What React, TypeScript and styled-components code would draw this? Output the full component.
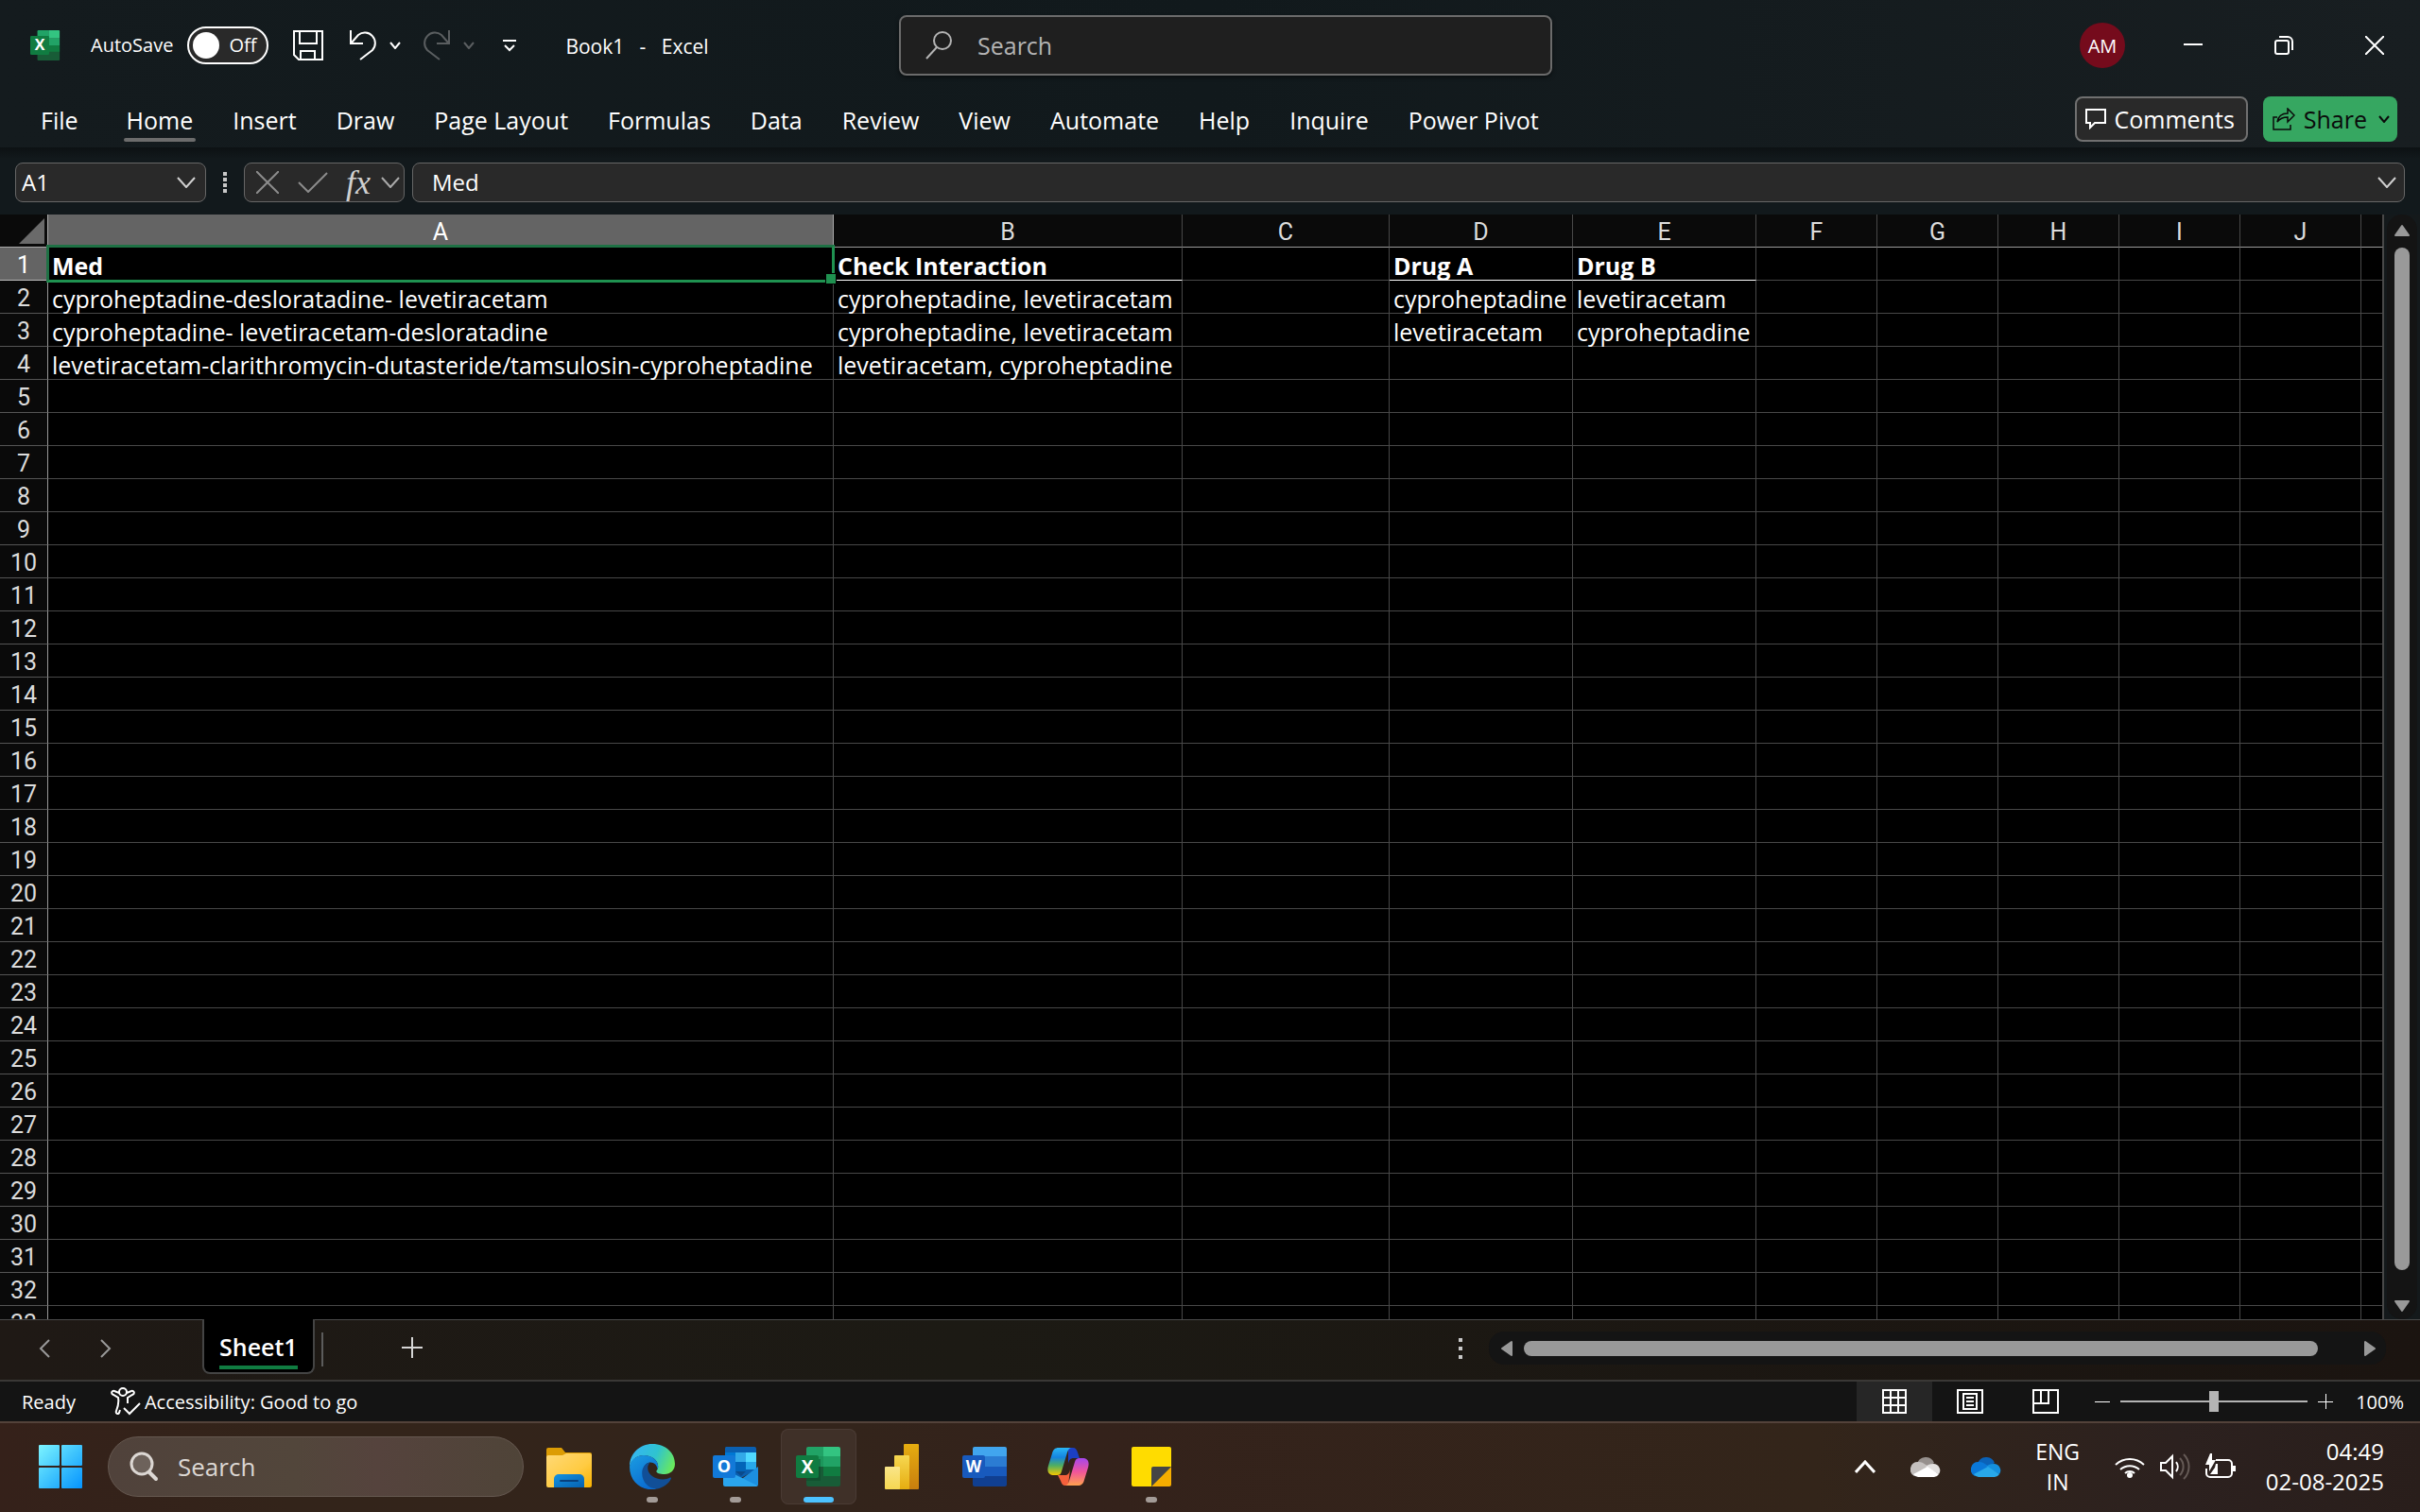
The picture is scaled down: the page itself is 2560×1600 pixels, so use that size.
import React from "react";
import styled, { createGlobalStyle, css } from "styled-components";

const uiFont = '"Open Sans", "Noto Sans", sans-serif';
const headFont = 'Roboto, "Liberation Sans", sans-serif';

const GlobalStyle = createGlobalStyle`
  * { box-sizing: border-box; }
  html, body { margin: 0; height: 100%; overflow: hidden; background: #000; }
  body { font-family: ${uiFont}; color: #fff; }
  button, input { font: inherit; color: inherit; }
  button { background: none; border: 0; padding: 0; margin: 0; cursor: pointer; }
  svg { display: block; flex: none; }
`;

const Desktop = styled.div`
  display: flex;
  flex-direction: column;
  height: 100vh;
  overflow: hidden;
  background: #131a1d;
`;

/* ---------- title bar ---------- */

const TitleBar = styled.header`
  flex: none;
  display: grid;
  grid-template-columns: minmax(0, 951fr) minmax(0, 691fr) minmax(0, 918fr);
  align-items: center;
  height: 96px;
  background: linear-gradient(90deg, #141b1e, #11191c 50%, #181e21);
`;

const QuickAccess = styled.div`
  display: flex;
  align-items: center;
  padding-left: 32px;
  font-size: 20px;
  white-space: nowrap;
`;

const AutoSave = styled.label`
  display: flex;
  align-items: center;
  gap: 15px;
  margin-left: 32px;
  line-height: 40px;
`;

const ToggleTrack = styled.span`
  display: flex;
  align-items: center;
  gap: 10px;
  width: 86px;
  height: 40px;
  padding-left: 4px;
  border: 2px solid #fff;
  border-radius: 20px;
  background: #292929;
`;

const ToggleInput = styled.input`
  appearance: none;
  width: 28px;
  height: 28px;
  margin: 0;
  border-radius: 50%;
  background: #fff;
`;

const ToolButton = styled.button<{ $space: number; $dim?: boolean }>`
  display: flex;
  margin-left: ${(p) => p.$space}px;
  color: ${(p) => (p.$dim ? "#5a5e60" : "#fff")};
`;

const DocTitle = styled.h1`
  margin: 0 0 0 52px;
  font-size: 21px;
  font-weight: 400;
  line-height: 32px;
  padding-top: 2px;
  white-space: pre;
`;

const TopSearch = styled.label`
  display: flex;
  align-items: center;
  gap: 27px;
  height: 64px;
  padding-left: 26px;
  border: 2px solid #6b6b6b;
  border-radius: 8px;
  background: #1f1f1f;
  box-shadow: 0 2px 4px rgba(0, 0, 0, 0.5);
  color: #b4b4b4;
`;

const BareInput = styled.input`
  flex: 1;
  min-width: 0;
  width: 100%;
  padding: 0;
  border: 0;
  outline: 0;
  background: transparent;
  &::placeholder { color: inherit; opacity: 1; }
`;

const SearchInput = styled(BareInput)`
  font-size: 25px;
`;

const WindowControls = styled.div`
  display: flex;
  align-items: center;
  justify-content: flex-end;
`;

const Avatar = styled.button`
  width: 48px;
  height: 48px;
  margin-right: 24px;
  border-radius: 50%;
  background: #750b1c;
  font-size: 20px;
`;

const WindowButton = styled.button`
  display: grid;
  place-items: center;
  width: 96px;
  height: 96px;
`;

/* ---------- ribbon tabs ---------- */

const RibbonRow = styled.div`
  flex: none;
  display: flex;
  align-items: center;
  height: 60px;
  padding: 0 24px 0 22px;
  background: linear-gradient(90deg, #141b1e, #11191c 50%, #181e21);
`;

const TabList = styled.nav`
  display: flex;
  flex: 1;
  & > :first-child { margin-right: 9px; }
`;

const RibbonTab = styled.button<{ $active?: boolean }>`
  position: relative;
  padding: 0 21px;
  height: 48px;
  font-size: 25px;
  line-height: 50px;
  white-space: nowrap;
  ${(p) =>
    p.$active &&
    css`
      &::after {
        content: "";
        position: absolute;
        left: 18px;
        right: 18px;
        bottom: 0;
        height: 4px;
        border-radius: 2px;
        background: #6c6c6c;
      }
    `}
`;

const ActionButton = styled.button<{ $primary?: boolean }>`
  display: flex;
  align-items: center;
  gap: 9px;
  height: 48px;
  margin-left: 16px;
  padding: 0 ${(p) => (p.$primary ? 8 : 12)}px 0 ${(p) => (p.$primary ? 10 : 9)}px;
  border: ${(p) => (p.$primary ? "0" : "2px solid #707070")};
  border-radius: 8px;
  background: ${(p) => (p.$primary ? "#36a761" : "#292929")};
  color: ${(p) => (p.$primary ? "#0a0a0a" : "#fff")};
  font-size: 25px;
`;

const MenuMark = styled.span`
  display: flex;
  padding-left: 3px;
`;

/* ---------- formula bar ---------- */

const FormulaRow = styled.div`
  flex: none;
  display: flex;
  align-items: center;
  height: 71px;
  padding: 2px 16px 0;
  background: linear-gradient(#0c1113, #12191c 12px);
`;

const Field = styled.div<{ $grow?: boolean }>`
  display: flex;
  align-items: center;
  height: 42px;
  border: 1px solid #666;
  border-radius: 8px;
  background: #292929;
  color: #fff;
  font-size: 24px;
  ${(p) => p.$grow && "flex: 1;"}
`;

const NameField = styled(Field)`
  width: 202px;
  padding: 0 10px 0 6px;
`;

const FormulaTools = styled(Field)`
  width: 170px;
  padding: 0 4px 0 12px;
  color: #8c8c8c;
`;

const FormulaField = styled(Field)`
  margin-left: 8px;
  padding: 0 8px 0 20px;
`;

const Grip = styled.div`
  display: flex;
  justify-content: center;
  width: 40px;
  color: #c8c8c8;
`;

const IconButton = styled.button<{ $color?: string; $space?: number }>`
  display: flex;
  margin-left: ${(p) => p.$space ?? 0}px;
  color: ${(p) => p.$color ?? "inherit"};
`;

const FxButton = styled(IconButton)`
  margin: 0 auto 0 19px;
  font-family: "Liberation Serif", serif;
  font-style: italic;
  font-size: 36px;
  line-height: 36px;
`;

/* ---------- sheet ---------- */

const SheetArea = styled.main`
  flex: 1;
  min-height: 0;
  display: flex;
  background: #14191b;
`;

const GridClip = styled.div`
  flex: 1;
  min-width: 0;
  overflow: hidden;
  background: #000;
  border-right: 1px solid #484848;
`;

const Grid = styled.table`
  width: 100%;
  table-layout: fixed;
  border-collapse: separate;
  border-spacing: 0;
  font-size: 25px;
  line-height: 30px;
`;

const Corner = styled.th`
  height: 35px;
  padding: 0 3px 0 20px;
  border-right: 1px solid #aaa;
  border-bottom: 1px solid #aaa;
  background: #0a0a0a;
`;

const ColumnHead = styled.th<{ $active?: boolean }>`
  height: 35px;
  padding: 3px 0 0;
  overflow: hidden;
  border-right: 1px solid ${(p) => (p.$active ? "#aaa" : "#484848")};
  border-bottom: 1px solid #999;
  background: ${(p) => (p.$active ? "#646464" : "#0a0a0a")};
  color: ${(p) => (p.$active ? "#fff" : "#dcdcdc")};
  font-family: ${headFont};
  font-weight: 400;
  line-height: 31px;
`;

const RowHead = styled.th<{ $active?: boolean }>`
  height: 35px;
  padding: 4px 0 0;
  border-right: 1px solid #999;
  border-bottom: 1px solid ${(p) => (p.$active ? "#bbb" : "#555")};
  background: ${(p) => (p.$active ? "#646464" : "#0a0a0a")};
  color: ${(p) => (p.$active ? "#fff" : "#dcdcdc")};
  font-family: ${headFont};
  font-weight: 400;
`;

const Cell = styled.td<{ $head?: boolean; $rule?: boolean }>`
  position: relative;
  height: 35px;
  padding: 3px 0 0 4px;
  border-right: 1px solid #484848;
  border-bottom: 1px solid ${(p) => (p.$rule ? "#fff" : "#484848")};
  font-weight: ${(p) => (p.$head ? 700 : 400)};
  white-space: nowrap;
`;

const Selection = styled.div`
  position: absolute;
  z-index: 1;
  inset: -3px -2px -3px -2px;
  border: 3px solid #1f9150;
  border-top-color: #1f7145;
  border-left-color: #1f7145;
  &::after {
    content: "";
    position: absolute;
    right: -5px;
    bottom: -5px;
    width: 10px;
    height: 10px;
    border: 1px solid #000;
    background: #1f9150;
  }
`;

const VerticalScroll = styled.div`
  flex: none;
  display: flex;
  flex-direction: column;
  align-items: center;
  gap: 11px;
  width: 32px;
  margin: 0 3px;
  padding: 10px 0 7px;
  border-radius: 16px;
  background: #141414;
  color: #999;
`;

const ScrollThumb = styled.div<{ $axis: "x" | "y" }>`
  flex: 1;
  border-radius: 8px;
  background: #999;
  ${(p) => (p.$axis === "x" ? "height: 16px;" : "width: 16px; margin-bottom: 20px;")}
`;

/* ---------- sheet tabs ---------- */

const SheetBar = styled.div`
  flex: none;
  display: flex;
  align-items: flex-start;
  height: 64px;
  border-top: 1px solid #4a4a4a;
  background: linear-gradient(90deg, #1f1915, #1c1a14 40%, #1b1410);
`;

const SheetNav = styled.div`
  display: flex;
  align-items: center;
  gap: 53px;
  width: 214px;
  height: 60px;
  padding-left: 41px;
  color: #999;
`;

const SheetTab = styled.button`
  height: 58px;
  margin-top: -1px;
  padding: 7px 16px 0;
  border: 2px solid #444;
  border-top: 0;
  border-radius: 0 0 8px 8px;
  background: #000;
  font-size: 25px;
  font-weight: 600;
  line-height: 36px;
`;

const TabLabel = styled.span`
  display: block;
  height: 42px;
  border-bottom: 4px solid #107c41;
`;

const TabDivider = styled.div`
  width: 2px;
  height: 36px;
  margin: 13px 83px 0 7px;
  background: #5c5c5c;
`;

const AddSheet = styled.button`
  display: flex;
  margin-top: 18px;
  color: #d6d6d6;
`;

const SheetBarEnd = styled.div`
  display: flex;
  align-items: center;
  gap: 28px;
  width: 981px;
  height: 35px;
  margin: 12px 36px 0 auto;
  color: #c8c8c8;
`;

const HorizontalScroll = styled.div`
  flex: 1;
  display: flex;
  align-items: center;
  gap: 11px;
  height: 35px;
  padding: 0 10px 0 12px;
  border-radius: 16px;
  background: #141414;
  color: #999;
`;

/* ---------- status bar ---------- */

const StatusBar = styled.footer`
  flex: none;
  display: flex;
  align-items: center;
  height: 44px;
  padding: 0 17px 0 23px;
  border-top: 2px solid #3a3836;
  background: #141414;
  font-size: 20px;
`;

const AccessibilityNote = styled.button`
  display: flex;
  align-items: center;
  gap: 4px;
  margin: 0 auto 0 37px;
`;

const ViewButton = styled.button<{ $active?: boolean }>`
  display: grid;
  place-items: center;
  width: 80px;
  height: 42px;
  background: ${(p) => (p.$active ? "#262626" : "transparent")};
`;

const ZoomControls = styled.div`
  display: flex;
  align-items: center;
  gap: 11px;
  padding-left: 12px;
`;

const ZoomSlider = styled.input`
  appearance: none;
  width: 198px;
  height: 24px;
  margin: 0;
  background: linear-gradient(#b4b4b4, #b4b4b4) center / 100% 2px no-repeat;
  &::-webkit-slider-thumb {
    appearance: none;
    width: 10px;
    height: 22px;
    background: #b4b4b4;
  }
`;

const ZoomValue = styled.button`
  width: 75px;
  text-align: right;
`;

/* ---------- taskbar ---------- */

const Taskbar = styled.div`
  flex: none;
  display: flex;
  align-items: center;
  height: 96px;
  padding: 0 38px 2px 41px;
  border-top: 2px solid #53423a;
  background: linear-gradient(90deg, #35211a, #33241a 12%, #33241b 35%, #34221b 45%, #33251a 75%, #2c211f 90%, #291e1b);
`;

const TaskSearch = styled.label`
  display: flex;
  align-items: center;
  gap: 19px;
  width: 440px;
  height: 64px;
  margin: 0 8px 0 27px;
  padding-left: 22px;
  border: 1px solid #655850;
  border-radius: 32px;
  background: linear-gradient(90deg, #50423b, #52463b 45%, #55433d 65%, #4f4438);
  color: #dcd7d3;
`;

const TaskSearchInput = styled(BareInput)`
  font-size: 26px;
`;

const Apps = styled.div`
  display: flex;
  gap: 8px;
  flex: 1;
`;

const AppButton = styled.button<{ $state?: "open" | "active" }>`
  position: relative;
  display: grid;
  place-items: center;
  width: 80px;
  height: 80px;
  border-radius: 8px;
  ${(p) =>
    p.$state === "active" &&
    "background: #3f3028; box-shadow: inset 0 0 0 1px #4a3b34;"}
  ${(p) =>
    p.$state &&
    css`
      &::after {
        content: "";
        position: absolute;
        bottom: 2px;
        left: 50%;
        width: ${p.$state === "active" ? 32 : 12}px;
        height: 6px;
        border-radius: 3px;
        transform: translateX(-50%);
        background: ${p.$state === "active" ? "#4cc2ff" : "#a39b97"};
      }
    `}
`;

const Tray = styled.div`
  display: flex;
  align-items: center;
  font-size: 24px;
  line-height: 32px;
`;

const TrayButton = styled.button<{ $space?: number }>`
  margin-left: ${(p) => p.$space ?? 0}px;
`;

const TrayText = styled(TrayButton)`
  font-size: 23px;
`;

const Clock = styled.button`
  width: 157px;
  text-align: right;
`;

/* ---------- icons ---------- */

type IconProps = { w: number; h: number; sw?: number; children: React.ReactNode };
const Icon = ({ w, h, sw = 2, children }: IconProps) => (
  <svg width={w} height={h} viewBox={`0 0 ${w} ${h}`} fill="none" stroke="currentColor" strokeWidth={sw} aria-hidden="true">
    {children}
  </svg>
);

const Chevron = ({ w = 12, h = 8, sw = 2 }) => (
  <Icon w={w} h={h} sw={sw}>
    <path d={`M1 1 L${w / 2} ${h - 1} L${w - 1} 1`} />
  </Icon>
);

const Triangle = ({ d, w, h }: { d: string; w: number; h: number }) => (
  <svg width={w} height={h} viewBox={`0 0 ${w} ${h}`} fill="currentColor" stroke="currentColor" strokeWidth="2" strokeLinejoin="round" aria-hidden="true">
    <path d={d} />
  </svg>
);

const logoText = {
  fill: "#fff",
  textAnchor: "middle" as const,
  fontFamily: "Open Sans, sans-serif",
  fontWeight: 700,
};

const ExcelLogo = ({ size }: { size: number }) => (
  <svg width={size} height={size} viewBox="0 0 48 48" aria-hidden="true">
    <defs>
      <clipPath id={`xl${size}`}><rect x="11" y={size < 40 ? 0 : 3} width="36" height={size < 40 ? 48 : 42} rx="2" /></clipPath>
    </defs>
    <g clipPath={`url(#xl${size})`}>
      <path fill="#21a366" d="M11 0h18v13H11z" />
      <path fill="#33c481" d="M29 0h18v13H29z" />
      <path fill="#21a366" d="M11 13h36v11H11z" />
      <path fill="#107c41" d="M11 13h18v11H11z" opacity=".3" />
      <path fill="#185c37" d="M11 24h36v24H11z" />
      <path fill="#107c41" d="M29 24h18v10H29z" />
      <path fill="#0b3b22" d="M11 16h15v23H11z" opacity=".35" />
    </g>
    <rect x="0" y={size < 40 ? 9 : 12} width={size < 40 ? 30 : 24} height={size < 40 ? 30 : 24} rx="2" fill="#107c41" />
    <text x={size < 40 ? 15 : 12} y={size < 40 ? 32 : 31} fontSize={size < 40 ? 24 : 19} {...logoText}>X</text>
  </svg>
);

const WordLogo = () => (
  <svg width="48" height="48" viewBox="0 0 48 48" aria-hidden="true">
    <defs>
      <clipPath id="wd"><rect x="11" y="3" width="36" height="42" rx="2" /></clipPath>
    </defs>
    <g clipPath="url(#wd)">
      <path fill="#41a5ee" d="M11 3h36v10H11z" />
      <path fill="#2b7cd3" d="M11 13h36v11H11z" />
      <path fill="#185abd" d="M11 24h36v10H11z" />
      <path fill="#103f91" d="M11 34h36v11H11z" />
    </g>
    <rect x="0" y="12" width="24" height="24" rx="2" fill="#185abd" />
    <text x="12" y="30" fontSize="17" {...logoText}>W</text>
  </svg>
);

const OutlookLogo = () => (
  <svg width="48" height="48" viewBox="0 0 48 48" aria-hidden="true">
    <path fill="#0a5fb0" d="M14 3h30a2 2 0 0 1 2 2v22L30 36 13 27V5a2 2 0 0 1 1-2z" />
    <path fill="#0078d4" d="M13 9h11v20H13z" />
    <path fill="#32a9e8" d="M24 9h11v10H24z" />
    <path fill="#50d9ff" d="M35 9h11v10H35z" />
    <path fill="#0364b8" d="M24 19h11v10H24z" />
    <path fill="#28a8ea" d="M35 19h11v8H35z" />
    <path fill="#0a4a8c" d="M24 29h11l-5 5z" />
    <path fill="#1c8fe0" d="M48 24v19a2 2 0 0 1-2 2H20z" />
    <path fill="#2aa5ee" d="M11 26l36 18a2 2 0 0 1-1 1H13a2 2 0 0 1-2-2z" />
    <rect x="0" y="12" width="24" height="24" rx="2" fill="#1279d8" />
    <text x="12" y="30" fontSize="18" {...logoText}>O</text>
  </svg>
);

const FolderLogo = () => (
  <svg width="48" height="48" viewBox="0 0 48 48" aria-hidden="true">
    <defs>
      <linearGradient id="fo" x1="0" y1="0" x2="1" y2="1"><stop stopColor="#ffd977" /><stop offset=".6" stopColor="#ffcb42" /><stop offset="1" stopColor="#f9b200" /></linearGradient>
      <linearGradient id="fb" x1="0" y1="0" x2="1" y2="1"><stop stopColor="#1493e0" /><stop offset="1" stopColor="#0560b0" /></linearGradient>
    </defs>
    <path fill="#dc9c04" d="M0 6a2 2 0 0 1 2-2h14l4 5h26a2 2 0 0 1 2 2v8H0z" />
    <path fill="url(#fo)" d="M0 14a2 2 0 0 1 2-2h15l4-2h25a2 2 0 0 1 2 2v32a2 2 0 0 1-2 2H2a2 2 0 0 1-2-2z" />
    <path fill="url(#fb)" d="M8 46v-9a5 5 0 0 1 5-5h22a5 5 0 0 1 5 5v9z" />
    <rect x="14" y="38" width="20" height="2" rx="1" fill="#07407d" />
  </svg>
);

const EdgeLogo = () => (
  <svg width="48" height="48" viewBox="0 0 24 24" aria-hidden="true">
    <defs>
      <linearGradient id="ea" x1="0" y1=".3" x2="1" y2=".6"><stop stopColor="#35b5f4" /><stop offset=".55" stopColor="#2fc3cf" /><stop offset="1" stopColor="#6ae95c" /></linearGradient>
      <linearGradient id="eb" x1="0" y1="0" x2=".6" y2="1"><stop stopColor="#1b9de2" /><stop offset="1" stopColor="#0a6bd0" /></linearGradient>
    </defs>
    <path fill="url(#ea)" d="M0 12C0 5 5.4 0 12 0c7.500 0 12 5 12 10.500C24 14 21.500 16 18.500 16c-2.500 0-4.300-.6-4.300-1.500 0-.5.900-.9.900-2.600C15.100 8.500 11.500 6 7.500 6 3.500 6 .9 8.500 0 12z" />
    <path fill="url(#eb)" d="M0 12c.6-3.600 3.700-6 7.500-6 4.300 0 7.600 2.600 7.600 6 0 .7-.1 1-.3 1.400-.2-2-1.700-3.600-3.800-3.600C8.500 9.800 7 12.500 7 15.300c0 4.300 3.700 7.600 7.300 8.500C7 25.400 0 20.500 0 12z" />
    <path fill="#114f97" d="M11 9.800C8.200 10 6.600 12.700 6.600 15.500c0 5 4 8.500 8 8.200 3.200-.5 6-2.600 7.300-5.200.3-.6-.1-.9-.7-.6-1 .5-2.200.8-3.600.8-4.300 0-8-2.600-8-6 0-1.200.600-2.300 1.400-2.900z" />
  </svg>
);

const PowerBiLogo = () => (
  <svg width="36" height="48" viewBox="0 0 36 48" aria-hidden="true">
    <defs>
      <linearGradient id="p1" x1="0" y1="0" x2="0" y2="1"><stop stopColor="#e6ad10" /><stop offset="1" stopColor="#c87e0e" /></linearGradient>
      <linearGradient id="p2" x1="0" y1="0" x2="0" y2="1"><stop stopColor="#f6d751" /><stop offset="1" stopColor="#e6ad10" /></linearGradient>
      <linearGradient id="p3" x1="0" y1="0" x2="0" y2="1"><stop stopColor="#f9e589" /><stop offset="1" stopColor="#f6d751" /></linearGradient>
    </defs>
    <rect x="20" width="16" height="48" rx="1" fill="url(#p1)" />
    <rect x="10" y="12" width="16" height="36" rx="1" fill="url(#p2)" />
    <rect y="24" width="16" height="24" rx="1" fill="url(#p3)" />
  </svg>
);

const CopilotLogo = () => (
  <svg width="44" height="40" viewBox="0 0 44 40" aria-hidden="true">
    <defs>
      <linearGradient id="c1" x1="0" y1="0" x2="0" y2="1"><stop stopColor="#2ab6f5" /><stop offset=".35" stopColor="#1484e0" /><stop offset=".65" stopColor="#4fae62" /><stop offset="1" stopColor="#f5c800" /></linearGradient>
      <linearGradient id="c2" x1="0" y1="0" x2="0" y2="1"><stop stopColor="#a546ee" /><stop offset=".5" stopColor="#f0559a" /><stop offset="1" stopColor="#ffa14e" /></linearGradient>
    </defs>
    <path fill="#1b3fc4" d="M22 0h5c3 0 4 2 5 5l2 6h-6c-4 0-5 2-6 6z" />
    <path fill="#f5603c" d="M22 40h-3c-3 0-4-2-5-5l-3-6h7c4 0 5-2 6-6z" />
    <path fill="url(#c1)" d="M12 0h14c-3 0-4 2-5 5l-6 20c-1 3-2 4-5 4H7c-5 0-8-3-6-10L5 6c1-4 3-6 7-6z" />
    <path fill="url(#c2)" d="M32 40H18c3 0 4-2 5-5l6-20c1-3 2-4 5-4h3c5 0 8 3 6 10l-4 13c-1 4-3 6-7 6z" />
  </svg>
);

const NotesLogo = () => (
  <svg width="42" height="42" viewBox="0 0 42 42" aria-hidden="true">
    <path fill="#ffdc00" d="M2 0h38a2 2 0 0 1 2 2v19L21 42H2a2 2 0 0 1-2-2V2a2 2 0 0 1 2-2z" />
    <path fill="#f5ad00" d="M42 21v19a2 2 0 0 1-2 2H21z" />
    <path fill="#454545" d="M23 21h19L21 42V23a2 2 0 0 1 2-2z" />
  </svg>
);

const WindowsLogo = () => (
  <svg width="46" height="46" viewBox="0 0 46 46" aria-hidden="true">
    <defs>
      <linearGradient id="wl" gradientUnits="userSpaceOnUse" x1="0" y1="0" x2="46" y2="46"><stop stopColor="#7df4ff" /><stop offset=".5" stopColor="#3fc4fd" /><stop offset="1" stopColor="#0594ff" /></linearGradient>
    </defs>
    <g fill="url(#wl)">
      <rect width="22" height="22" rx="1" /><rect x="24" width="22" height="22" rx="1" />
      <rect y="24" width="22" height="22" rx="1" /><rect x="24" y="24" width="22" height="22" rx="1" />
    </g>
  </svg>
);

const Cloud = ({ c }: { c: [string, string, string, string] }) => (
  <svg width="32" height="21" viewBox="0 0 32 21" aria-hidden="true">
    <path fill={c[0]} d="M7 7a9.500 9.500 0 0 1 18-1l-8 6z" />
    <path fill={c[1]} d="M8 5c2 0 3 0 5 1l8 5L4 20A8 8 0 0 1 8 5z" />
    <path fill={c[2]} d="M24 7a7 7 0 0 1 6 11L16 10c2-2 5-3 8-3z" />
    <path fill={c[3]} d="M3 18l15-8 12 8a6 6 0 0 1-5 3H8a7 7 0 0 1-5-3z" />
  </svg>
);

/* ---------- data ---------- */

const tabs = ["File", "Home", "Insert", "Draw", "Page Layout", "Formulas", "Data", "Review", "View", "Automate", "Help", "Inquire", "Power Pivot"];

const columns: { name: string; width?: number }[] = [
  { name: "A", width: 831 }, { name: "B", width: 369 }, { name: "C", width: 219 },
  { name: "D", width: 194 }, { name: "E", width: 194 }, { name: "F", width: 128 },
  { name: "G", width: 128 }, { name: "H", width: 128 }, { name: "I", width: 128 },
  { name: "J", width: 128 }, { name: "" },
];

const values: Record<string, string> = {
  A1: "Med", B1: "Check Interaction", D1: "Drug A", E1: "Drug B",
  A2: "cyproheptadine-desloratadine- levetiracetam",
  B2: "cyproheptadine, levetiracetam", D2: "cyproheptadine", E2: "levetiracetam",
  A3: "cyproheptadine- levetiracetam-desloratadine",
  B3: "cyproheptadine, levetiracetam", D3: "levetiracetam", E3: "cyproheptadine",
  A4: "levetiracetam-clarithromycin-dutasteride/tamsulosin-cyproheptadine",
  B4: "levetiracetam, cyproheptadine",
};

const rows = Array.from({ length: 33 }, (_, i) => i + 1);

/* ---------- sections ---------- */

const Title = () => (
  <TitleBar>
    <QuickAccess>
      <ExcelLogo size={32} />
      <AutoSave>
        AutoSave
        <ToggleTrack><ToggleInput type="checkbox" />Off</ToggleTrack>
      </AutoSave>
      <ToolButton $space={26} aria-label="Save">
        <Icon w={32} h={32}>
          <path d="M1 1h30v30H6l-5-5z M7 1v13h18V1 M8 31V22h15v9" />
        </Icon>
      </ToolButton>
      <ToolButton $space={28} aria-label="Undo">
        <Icon w={28} h={32}><path d="M1 0v14h13 M2 13L9 5a11 11 0 0 1 15 16L11 31" /></Icon>
      </ToolButton>
      <ToolButton $space={14} aria-label="Undo options"><Chevron /></ToolButton>
      <ToolButton $space={24} $dim aria-label="Redo">
        <Icon w={28} h={32}><path d="M27 0v14H14 M26 13L19 5A11 11 0 0 0 4 21l13 10" /></Icon>
      </ToolButton>
      <ToolButton $space={14} $dim aria-label="Redo options"><Chevron /></ToolButton>
      <ToolButton $space={30} aria-label="Customize Quick Access Toolbar">
        <Icon w={14} h={14}><path d="M0 2h14 M2 7l5 5 5-5" /></Icon>
      </ToolButton>
      <DocTitle>Book1   -   Excel</DocTitle>
    </QuickAccess>
    <TopSearch>
      <Icon w={28} h={30}><circle cx="18" cy="10" r="9" /><path d="M12 17L1 29" /></Icon>
      <SearchInput placeholder="Search" aria-label="Search" />
    </TopSearch>
    <WindowControls>
      <Avatar>AM</Avatar>
      <WindowButton aria-label="Minimize"><Icon w={20} h={20}><path d="M0 9h20" /></Icon></WindowButton>
      <WindowButton aria-label="Restore">
        <Icon w={20} h={20}><rect x="1" y="5" width="14" height="14" rx="2" /><path d="M5 1h9a5 5 0 0 1 5 5v9" /></Icon>
      </WindowButton>
      <WindowButton aria-label="Close"><Icon w={20} h={20}><path d="M0 0l20 20M20 0L0 20" /></Icon></WindowButton>
    </WindowControls>
  </TitleBar>
);

const Ribbon = () => (
  <RibbonRow>
    <TabList>
      {tabs.map((t) => <RibbonTab key={t} $active={t === "Home"}>{t}</RibbonTab>)}
    </TabList>
    <ActionButton>
      <Icon w={22} h={22}><path d="M1 1h20v14H10l-5 5v-5H1z" /></Icon>
      Comments
    </ActionButton>
    <ActionButton $primary>
      <Icon w={24} h={24} sw={1}>
        <path d="M5 10H1v13h18v-5 M5 15c1-6 4-9 11-9V1l7 7-7 7v-5c-5 0-8 1-11 5z" strokeWidth="1.500" />
      </Icon>
      Share
      <MenuMark><Chevron /></MenuMark>
    </ActionButton>
  </RibbonRow>
);

const FormulaBar = () => (
  <FormulaRow>
    <NameField>
      <BareInput defaultValue="A1" aria-label="Name box" />
      <IconButton aria-label="Named ranges" $color="#d0d0d0"><Chevron w={20} h={12} /></IconButton>
    </NameField>
    <Grip>
      <Icon w={4} h={22} sw={4}><path d="M2 0v22" strokeDasharray="4 2" /></Icon>
    </Grip>
    <FormulaTools>
      <IconButton aria-label="Cancel"><Icon w={24} h={24}><path d="M0 0l24 24M24 0L0 24" /></Icon></IconButton>
      <IconButton aria-label="Enter" $space={20}><Icon w={32} h={22}><path d="M1 11l10 10L31 1" /></Icon></IconButton>
      <FxButton aria-label="Insert function" $color="#d0d0d0">fx</FxButton>
      <IconButton aria-label="Function options" $color="#aaa"><Chevron w={20} h={12} /></IconButton>
    </FormulaTools>
    <FormulaField $grow>
      <BareInput defaultValue="Med" aria-label="Formula bar" />
      <IconButton aria-label="Expand formula bar" $color="#d0d0d0"><Chevron w={20} h={12} /></IconButton>
    </FormulaField>
  </FormulaRow>
);

const Sheet = () => (
  <SheetArea>
    <GridClip>
      <Grid>
        <colgroup>
          <col width={51} />
          {columns.map((c) => <col key={c.name} width={c.width} />)}
        </colgroup>
        <thead>
          <tr>
            <Corner aria-label="Select all">
              <svg width="27" height="27" viewBox="0 0 27 27" aria-hidden="true"><path fill="#6a6a6a" d="M27 0v27H0z" /></svg>
            </Corner>
            {columns.map((c) => <ColumnHead key={c.name} scope="col" $active={c.name === "A"}>{c.name}</ColumnHead>)}
          </tr>
        </thead>
        <tbody>
          {rows.map((r) => (
            <tr key={r}>
              <RowHead scope="row" $active={r === 1}>{r}</RowHead>
              {columns.map((c) => {
                const id = `${c.name}${r}`;
                return (
                  <Cell key={id} $head={r === 1} $rule={r === 1 && id in values}>
                    {values[id]}
                    {id === "A1" && <Selection />}
                  </Cell>
                );
              })}
            </tr>
          ))}
        </tbody>
      </Grid>
    </GridClip>
    <VerticalScroll>
      <IconButton aria-label="Scroll up"><Triangle w={18} h={14} d="M9 2l7 10H2z" /></IconButton>
      <ScrollThumb $axis="y" />
      <IconButton aria-label="Scroll down"><Triangle w={18} h={14} d="M9 12L2 2h14z" /></IconButton>
    </VerticalScroll>
  </SheetArea>
);

const SheetTabs = () => (
  <SheetBar>
    <SheetNav>
      <IconButton aria-label="Previous sheet"><Icon w={12} h={20}><path d="M11 1L2 10l9 9" /></Icon></IconButton>
      <IconButton aria-label="Next sheet"><Icon w={12} h={20}><path d="M1 1l9 9-9 9" /></Icon></IconButton>
    </SheetNav>
    <SheetTab><TabLabel>Sheet1</TabLabel></SheetTab>
    <TabDivider />
    <AddSheet aria-label="New sheet"><Icon w={22} h={22}><path d="M11 0v22M0 11h22" /></Icon></AddSheet>
    <SheetBarEnd>
      <Icon w={4} h={22} sw={4}><path d="M2 0v22" strokeDasharray="4 5" /></Icon>
      <HorizontalScroll>
        <IconButton aria-label="Scroll left"><Triangle w={14} h={18} d="M2 9l10-7v14z" /></IconButton>
        <ScrollThumb $axis="x" />
        <IconButton aria-label="Scroll right" $space={37}><Triangle w={14} h={18} d="M12 9L2 2v14z" /></IconButton>
      </HorizontalScroll>
    </SheetBarEnd>
  </SheetBar>
);

const Status = () => (
  <StatusBar>
    <span>Ready</span>
    <AccessibilityNote>
      <Icon w={32} h={30}>
        <circle cx="13" cy="5" r="4" />
        <path d="M9 6L4 4c-3-1-4 3-1 4l5 3c1 5 0 9-2 14-1 3 2 4 3 2l1-3 M17 6l5-2c3-1 4 3 1 4l-5 3v6 M14 22l6 6L31 17" />
      </Icon>
      Accessibility: Good to go
    </AccessibilityNote>
    <ViewButton $active aria-label="Normal view">
      <Icon w={26} h={26}><path d="M1 1h24v24H1z M9 1v24 M17 1v24 M1 9h24 M1 17h24" /></Icon>
    </ViewButton>
    <ViewButton aria-label="Page layout view">
      <Icon w={28} h={26}><path d="M1 1h26v24H1z M7 5h14v16H7z M10 9h8 M10 13h8 M10 17h8" /></Icon>
    </ViewButton>
    <ViewButton aria-label="Page break preview">
      <Icon w={28} h={26}><path d="M1 1h26v24H1z M9 1v14 M17 1v14H1" /></Icon>
    </ViewButton>
    <ZoomControls>
      <IconButton aria-label="Zoom out"><Icon w={16} h={16} sw={1}><path d="M0 8.500h16" /></Icon></IconButton>
      <ZoomSlider type="range" min={10} max={190} defaultValue={100} aria-label="Zoom" />
      <IconButton aria-label="Zoom in"><Icon w={16} h={16} sw={1}><path d="M0 8.500h16M8.500 0v16" /></Icon></IconButton>
    </ZoomControls>
    <ZoomValue>100%</ZoomValue>
  </StatusBar>
);

const Bar = () => (
  <Taskbar>
    <IconButton aria-label="Start"><WindowsLogo /></IconButton>
    <TaskSearch>
      <Icon w={32} h={32} sw={3}><circle cx="13" cy="13" r="11" fill="#6d625b" /><path d="M21 22l7 7" strokeWidth="4" strokeLinecap="round" /></Icon>
      <TaskSearchInput placeholder="Search" aria-label="Search Windows" />
    </TaskSearch>
    <Apps>
      <AppButton aria-label="File Explorer"><FolderLogo /></AppButton>
      <AppButton aria-label="Edge" $state="open"><EdgeLogo /></AppButton>
      <AppButton aria-label="Outlook" $state="open"><OutlookLogo /></AppButton>
      <AppButton aria-label="Excel" $state="active"><ExcelLogo size={48} /></AppButton>
      <AppButton aria-label="Power BI"><PowerBiLogo /></AppButton>
      <AppButton aria-label="Word"><WordLogo /></AppButton>
      <AppButton aria-label="Copilot"><CopilotLogo /></AppButton>
      <AppButton aria-label="Sticky Notes" $state="open"><NotesLogo /></AppButton>
    </Apps>
    <Tray>
      <TrayButton aria-label="Hidden icons"><Icon w={22} h={14} sw={3}><path d="M1 13L11 2l10 11" /></Icon></TrayButton>
      <TrayButton $space={37} aria-label="OneDrive personal"><Cloud c={["#96908d", "#c4c0be", "#e3e1e0", "#fff"]} /></TrayButton>
      <TrayButton $space={32} aria-label="OneDrive"><Cloud c={["#0a62b8", "#0a78d8", "#1490df", "#28a8ea"]} /></TrayButton>
      <TrayText $space={36}>ENG<br />IN</TrayText>
      <TrayButton $space={37} aria-label="Network">
        <Icon w={32} h={24} sw={3}><path d="M1 10a22 22 0 0 1 30 0 M6 15a15 15 0 0 1 20 0 M11 19a7 7 0 0 1 10 0" strokeWidth="2" /><circle cx="16" cy="21" r="3" fill="currentColor" stroke="none" /></Icon>
      </TrayButton>
      <TrayButton $space={16} aria-label="Volume">
        <Icon w={32} h={28}><path d="M1 10h5l7-7v22l-7-7H1z M17 9a8 8 0 0 1 0 10" /><path d="M21 5a13 13 0 0 1 0 18 M25 1a18 18 0 0 1 0 26" stroke="#655a56" /></Icon>
      </TrayButton>
      <TrayButton $space={16} aria-label="Battery">
        <Icon w={32} h={28}><path d="M11 7h13a4 4 0 0 1 4 4v10a4 4 0 0 1-4 4H5a4 4 0 0 1-4-4v-5" /><path d="M29 14h2v4h-2z" fill="currentColor" /><path d="M5 0L0 12h4v7l7-12H7V0z M13 11v11H5l5-7 1-4z" fill="currentColor" stroke="none" /></Icon>
      </TrayButton>
      <Clock>04:49<br />02-08-2025</Clock>
    </Tray>
  </Taskbar>
);

export default function App() {
  return (
    <Desktop>
      <GlobalStyle />
      <Title />
      <Ribbon />
      <FormulaBar />
      <Sheet />
      <SheetTabs />
      <Status />
      <Bar />
    </Desktop>
  );
}
